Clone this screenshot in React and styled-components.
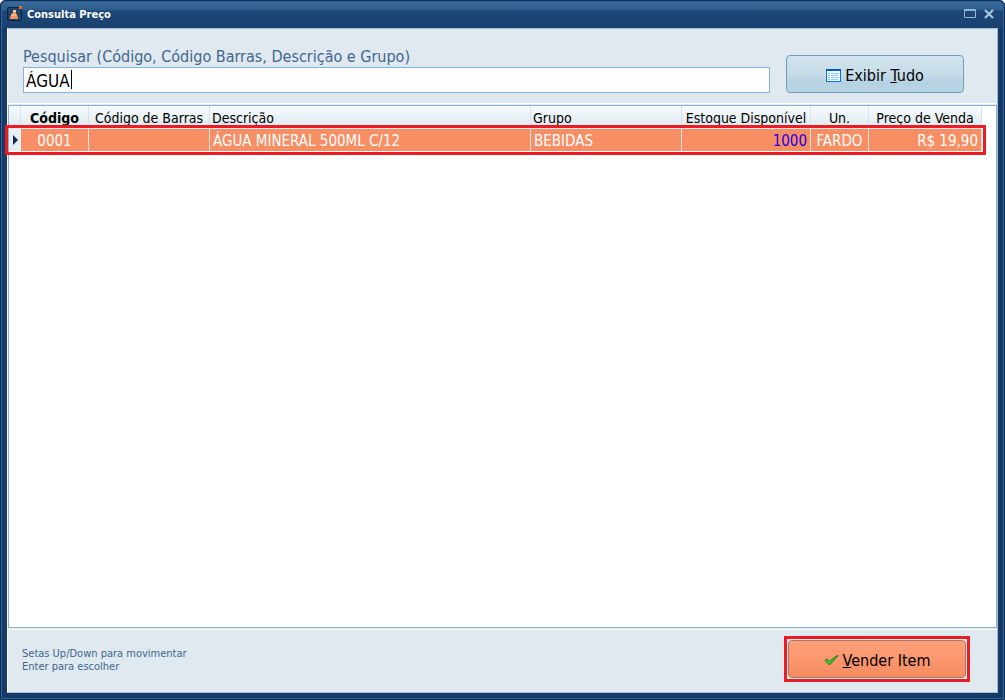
import React, { useEffect, useRef, useState } from 'react';
import styled, { createGlobalStyle } from 'styled-components';

const GlobalStyle = createGlobalStyle`
  * {
    box-sizing: border-box;
  }

  body {
    margin: 0;
    font-family: Tahoma, "DejaVu Sans Condensed", "DejaVu Sans", sans-serif;
    font-size: 14px;
    color: #000;
  }

  button, input {
    font-family: inherit;
  }
`;

const columns = [
    { key: 'codigo', title: 'Código', width: 68, head: 'center', cell: 'center', bold: true },
    { key: 'barras', title: 'Código de Barras', width: 121, head: 'center', cell: 'left' },
    { key: 'descricao', title: 'Descrição', head: 'left', cell: 'left' },
    { key: 'grupo', title: 'Grupo', width: 151, head: 'left', cell: 'left' },
    { key: 'estoque', title: 'Estoque Disponível', width: 129, head: 'center', cell: 'right', color: '#1c00e6' },
    { key: 'un', title: 'Un.', width: 58, head: 'center', cell: 'center' },
    { key: 'preco', title: 'Preço de Venda', width: 113, head: 'center', cell: 'right' },
];

const items = [
    {
        codigo: '0001',
        barras: '',
        descricao: 'ÁGUA MINERAL 500ML C/12',
        grupo: 'BEBIDAS',
        estoque: '1000',
        un: 'FARDO',
        preco: 'R$ 19,90',
    },
];

const LogoIcon = () => (
    <svg width="16" height="16" viewBox="0 0 16 16" aria-hidden="true">
        <rect x="0.5" y="1.5" width="14" height="13" rx="1" fill="#1f4468" stroke="#0b2540" />
        <path d="M6 4h3v3l2 4v2H3v-2l2-4h1z" fill="#f58f5c" />
        <path d="M6 4h3v2H6z" fill="#ffc9a0" />
        <path d="M5 8h4l1 2H4z" fill="#ffb98c" />
        <path d="M12 0h3v3h-3z" fill="#e8702a" />
    </svg>
);

const MaximizeIcon = () => (
    <svg width="12" height="10" viewBox="0 0 12 10" aria-hidden="true">
        <path d="M0.5 0.5h11v8h-11z" fill="none" stroke="#8fb9d2" />
        <path d="M1 1.5h10" stroke="#8fb9d2" />
    </svg>
);

const CloseIcon = () => (
    <svg width="10" height="10" viewBox="0 0 10 10" aria-hidden="true">
        <path d="M1 1l8 8M9 1l-8 8" stroke="#a3c8de" strokeWidth="2.200" />
    </svg>
);

const ListIcon = () => (
    <svg width="15" height="13" viewBox="0 0 15 13" aria-hidden="true">
        <rect x="0.5" y="0.5" width="14" height="12" fill="#eff9ff" stroke="#0a72e0" />
        <path d="M0 1h15" stroke="#0458c8" strokeWidth="2" />
        <path d="M2 4.5h2M2 6.5h2M2 8.5h2M2 10.5h2" stroke="#6cc0f5" />
        <path d="M5 4.5h8M5 6.5h7M5 8.5h8M5 10.5h7" stroke="#8ed0fa" />
    </svg>
);

const CheckIcon = () => (
    <svg width="15" height="11" viewBox="0 0 15 11" aria-hidden="true">
        <path d="M1 5.500l2-1.500 2.500 2.500 6-5 2.500-1-8.500 9.500z" fill="#3bd02b" stroke="#167a12" />
    </svg>
);

const measureText = (input, text) => {
    const context = document.createElement('canvas').getContext('2d');
    context.font = window.getComputedStyle(input).font;
    return Math.round(context.measureText(text).width);
};

const App = () => {
    const [search, setSearch] = useState('ÁGUA');
    const [caretLeft, setCaretLeft] = useState(0);
    const inputRef = useRef(null);

    const moveCaret = () => {
        const input = inputRef.current;
        setCaretLeft(input.offsetLeft + 4 + measureText(input, input.value.slice(0, input.selectionEnd)));
    };

    useEffect(() => {
        const input = inputRef.current;
        input.focus();
        input.setSelectionRange(input.value.length, input.value.length);
        moveCaret();
    }, []);

    return (
        <Window>
            <GlobalStyle />
            <TitleBar>
                <LogoIcon />
                <Title>Consulta Preço</Title>
                <TitleButton type="button" aria-label="Maximizar"><MaximizeIcon /></TitleButton>
                <TitleButton type="button" aria-label="Fechar"><CloseIcon /></TitleButton>
            </TitleBar>
            <Body>
                <SearchPanel>
                    <SearchField>
                        <SearchLabel htmlFor="search">
                            Pesquisar (Código, Código Barras, Descrição e Grupo)
                        </SearchLabel>
                        <SearchInput
                            id="search"
                            ref={inputRef}
                            type="text"
                            autoComplete="off"
                            spellCheck={false}
                            value={search}
                            onChange={(e) => setSearch(e.target.value)}
                            onSelect={moveCaret}
                        />
                        <Caret style={{ left: caretLeft }} />
                    </SearchField>
                    <ActionButton type="button">
                        <ListIcon />
                        <span>Exibir <u>T</u>udo</span>
                    </ActionButton>
                </SearchPanel>
                <Grid>
                    <Table>
                        <colgroup>
                            <Col $width={12} />
                            {columns.map((col) => <Col key={col.key} $width={col.width} />)}
                        </colgroup>
                        <thead>
                            <tr>
                                <HeadCell />
                                {columns.map((col) => (
                                    <HeadCell key={col.key} scope="col" $align={col.head} $bold={col.bold}>
                                        {col.title}
                                    </HeadCell>
                                ))}
                            </tr>
                        </thead>
                        <tbody>
                            {items.map((item) => (
                                <SelectedRow key={item.codigo}>
                                    <MarkerCell><Marker /></MarkerCell>
                                    {columns.map((col) => (
                                        <Cell key={col.key} $align={col.cell} $color={col.color}>
                                            {item[col.key]}
                                        </Cell>
                                    ))}
                                </SelectedRow>
                            ))}
                        </tbody>
                    </Table>
                </Grid>
                <Footer>
                    <Hint>
                        Setas Up/Down para movimentar<br />
                        Enter para escolher
                    </Hint>
                    <Highlight>
                        <ActionButton type="button" $primary>
                            <CheckIcon />
                            <span><u>V</u>ender Item</span>
                        </ActionButton>
                    </Highlight>
                </Footer>
            </Body>
        </Window>
    );
};

const Window = styled.div`
  display: flex;
  flex-direction: column;
  min-height: 100vh;
  padding: 0 7px 6px;
  background: #173b69;
  border: 1px solid #0f2c52;
  border-radius: 5px 5px 0 0;
  box-shadow: inset 0 0 0 1px #2f6496;
`;

const TitleBar = styled.header`
  display: flex;
  align-items: center;
  height: 26px;
  margin: 1px -6px 0;
  padding: 0 5px 2px 5px;
  background: linear-gradient(#3a6b99 0, #2c5c8c 8px, #1d4777 9px, #1a4170 100%);
  border-radius: 4px 4px 0 0;
`;

const Title = styled.h1`
  flex: 1;
  margin: 0 0 0 4px;
  font-size: 11px;
  font-weight: bold;
  color: #fff;
`;

const TitleButton = styled.button`
  display: flex;
  align-items: center;
  justify-content: center;
  width: 19px;
  height: 19px;
  padding: 0;
  background: none;
  border: none;
`;

const Body = styled.main`
  flex: 1;
  display: flex;
  flex-direction: column;
  background: #e1e9f0;
  border: 1px solid #a3bdd6;
  border-left-color: #fff;
  margin: 0 -1px 0 -1px;
`;

const SearchPanel = styled.section`
  display: flex;
  align-items: flex-end;
  gap: 16px;
  padding: 18px 33px 10px 15px;
  border-bottom: 1px solid #fff;
`;

const SearchField = styled.div`
  position: relative;
  flex: 1;
  display: flex;
  flex-direction: column;
`;

const SearchLabel = styled.label`
  font-size: 16px;
  line-height: 20px;
  color: #40678f;
`;

const SearchInput = styled.input`
  width: 100%;
  height: 26px;
  padding: 1px 2px 0;
  font-size: 17px;
  color: #000;
  caret-color: transparent;
  background: #fff;
  border: 1px solid #8ab2cf;
  outline: none;
`;

const Caret = styled.span`
  position: absolute;
  bottom: 4px;
  width: 1px;
  height: 19px;
  background: #000;
  visibility: hidden;

  ${SearchInput}:focus + & {
    visibility: visible;
  }
`;

const ActionButton = styled.button`
  display: flex;
  align-items: center;
  justify-content: center;
  gap: 4px;
  width: 178px;
  height: 38px;
  padding: 2px 0 0;
  font-size: 16px;
  color: #000;
  background: ${({ $primary }) =>
        $primary
            ? 'linear-gradient(#ffa17a, #f68c61)'
            : 'linear-gradient(#d3e4ee 0, #c6dce8 50%, #b4d2e2 75%, #b8d5e4 100%)'};
  border: 1px solid ${({ $primary }) => ($primary ? '#a8786a' : '#6c9fbf')};
  border-radius: 4px;
`;

const Grid = styled.section`
  flex: 1;
  margin-top: 1px;
  padding-right: 14px;
  background: #fff;
  border: 1px solid #8fb2cc;
`;

const Table = styled.table`
  width: 100%;
  table-layout: fixed;
  border-collapse: separate;
  border-spacing: 0;
`;

const Col = styled.col`
  width: ${({ $width }) => ($width ? `${$width}px` : 'auto')};
`;

const HeadCell = styled.th`
  height: 23px;
  padding: 0 2px;
  font-size: 14px;
  line-height: 20px;
  font-weight: ${({ $bold }) => ($bold ? 'bold' : 'normal')};
  text-align: ${({ $align }) => $align};
  white-space: nowrap;
  background: linear-gradient(#f8fbfc, #dbe9f0);
  border-right: 1px solid #d5e3ec;
`;

const SelectedRow = styled.tr`
  color: #fff;
  background: #f78e64;
  outline: 3px solid #ed1c24;
  outline-offset: 1px;
`;

const Cell = styled.td`
  height: 22px;
  padding: 2px 3px 0;
  font-size: 15px;
  line-height: 20px;
  text-align: ${({ $align }) => $align};
  color: ${({ $color }) => $color || 'inherit'};
  white-space: nowrap;
  border-right: 1px solid #e6e2e0;
`;

const MarkerCell = styled.td`
  padding: 0 0 0 4px;
  background: #e6eff4;
`;

const Marker = styled.div`
  width: 0;
  border: 5px solid transparent;
  border-left-color: #0d2c5a;
  border-right: none;
`;

const Footer = styled.footer`
  display: flex;
  align-items: center;
  justify-content: space-between;
  margin-top: 1px;
  padding: 6px 27px 10px 14px;
  border-top: 1px solid #fff;
`;

const Hint = styled.p`
  margin: 0;
  padding-top: 2px;
  font-size: 11px;
  line-height: 13px;
  color: #40678f;
`;

const Highlight = styled.div`
  padding: 1px;
  border: 3px solid #ed1c24;
`;

export default App;
